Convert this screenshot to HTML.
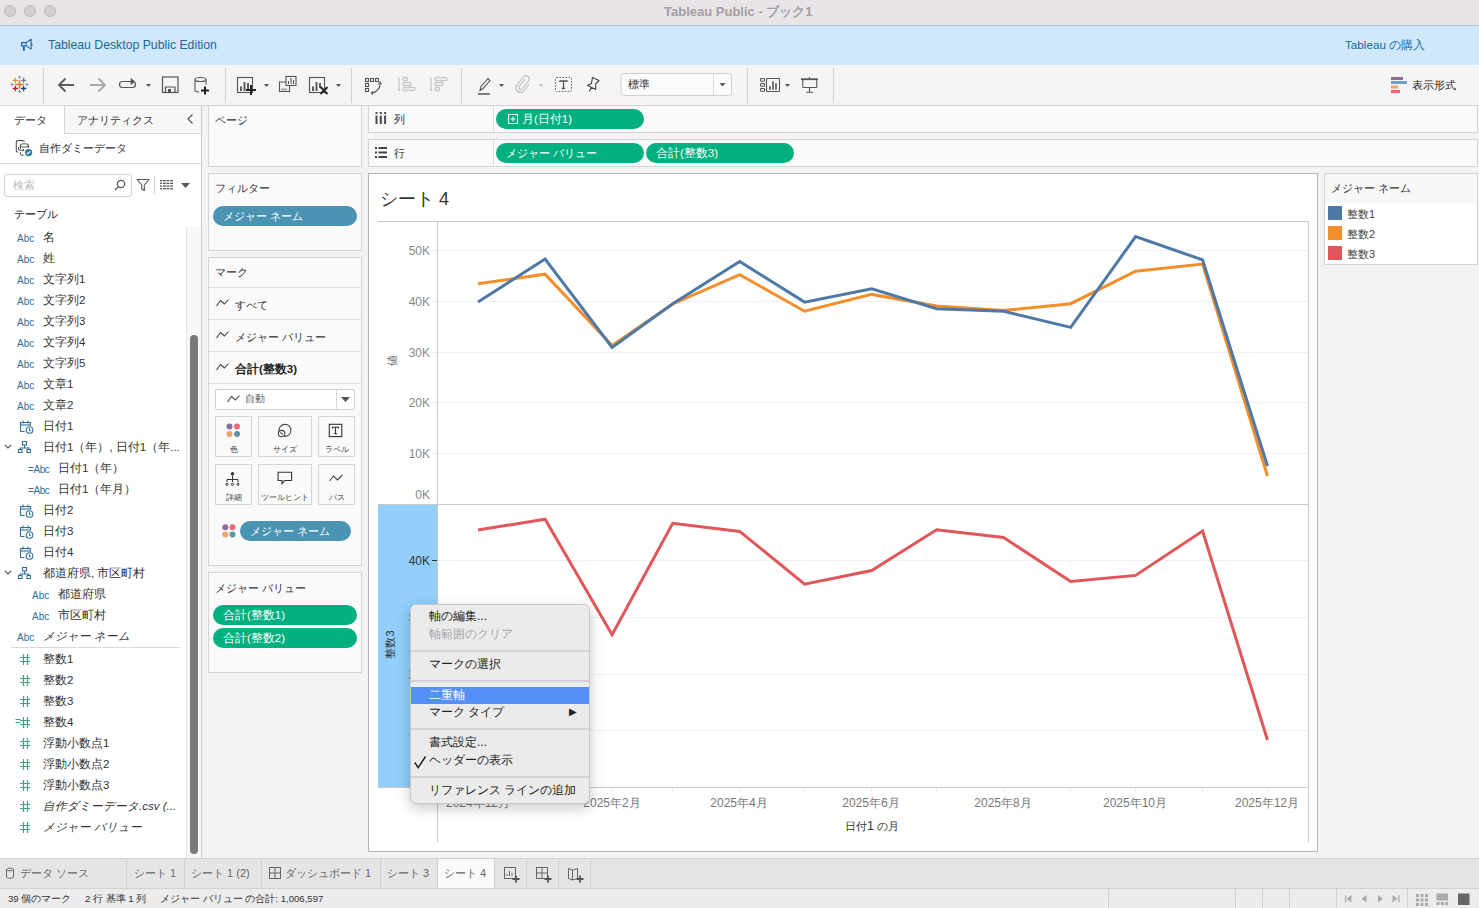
<!DOCTYPE html>
<html><head><meta charset="utf-8">
<style>
*{box-sizing:border-box;margin:0;padding:0}
html,body{width:1479px;height:908px;overflow:hidden;background:#f3f3f3;font-family:"Liberation Sans",sans-serif;color:#333;font-size:12px}
.a{position:absolute}
.t{position:absolute;white-space:nowrap;line-height:1}
#titlebar{left:0;top:0;width:1479px;height:26px;background:#e8e4e8;border-bottom:1px solid #a9bccc}
.tl{width:12px;height:12px;border-radius:50%;background:#d3cfd3;border:1px solid #bdb9bd;top:5px}
#banner{left:0;top:26px;width:1479px;height:39px;background:#cfe8fc}
#toolbar{left:0;top:65px;width:1479px;height:41px;background:#f5f5f5;border-bottom:1px solid #d6d6d6}
.sep{position:absolute;width:1px;background:#d0d0d0;top:3px;height:35px}
#datapane{left:0;top:106px;width:202px;height:752px;background:#fff;border-right:1px solid #cfcfcf}
.card{position:absolute;background:#fafafa;border:1px solid #d4d4d4}
.pill{position:absolute;height:20px;border-radius:10px;background:#01af7f;color:#fff;font-size:11px;line-height:20px;padding-left:10px;white-space:nowrap}
.pillb{background:#4b93b3}
.di{position:absolute;left:0;height:21px;width:186px;white-space:nowrap;font-size:12px;line-height:21px}
.abc{position:absolute;font-size:10px;color:#3b79a0;top:0}
.hash{position:absolute;font-size:14px;color:#35a57a;top:0}
</style></head><body>

<!-- title bar -->
<div id="titlebar" class="a">
  <div class="a tl" style="left:4px"></div>
  <div class="a tl" style="left:24px"></div>
  <div class="a tl" style="left:44px"></div>
  <div class="t" style="left:664px;top:5px;font-size:13px;font-weight:bold;color:#a39fa3">Tableau Public - ブック1</div>
</div>

<!-- banner -->
<div id="banner" class="a">
  <svg class="a" style="left:20px;top:12px" width="14" height="14" viewBox="20 38 14 14"><g fill="none" stroke="#1f64a0" stroke-linejoin="round"><path d="M21.6 42.6h4.6l4.9-3.3v9.8l-4.9-3.2h-4.6z" stroke-width="1.1"/><path d="M26.2 42.6v3.3" stroke-width="0.9"/><path d="M23.9 46.2v4.5" stroke-width="1.8"/></g><path d="M31.3 43.4a1.2 1.2 0 0 1 0 2.5z" fill="#1f64a0"/></svg>
  <div class="t" style="left:48px;top:13px;font-size:12.25px;color:#21699a">Tableau Desktop Public Edition</div>
  <div class="t" style="left:1345px;top:13px;font-size:11.7px;color:#21699a">Tableau の購入</div>
</div>

<!-- toolbar -->
<div id="toolbar" class="a"></div>
<svg class="a" style="left:0;top:0" width="1479" height="106" viewBox="0 0 1479 106">
 <g stroke="#d2d2d2" stroke-width="1">
  <line x1="43.5" y1="68" x2="43.5" y2="103"/><line x1="225.5" y1="68" x2="225.5" y2="103"/>
  <line x1="351.5" y1="68" x2="351.5" y2="103"/><line x1="461.5" y1="68" x2="461.5" y2="103"/>
  <line x1="747.5" y1="68" x2="747.5" y2="103"/><line x1="833.5" y1="68" x2="833.5" y2="103"/>
 </g>
 <path d="M15.3 84.5h8.4M19.5 80.3v8.4" stroke="#e8762d" stroke-width="1.6"/><path d="M12.600000000000001 80.4h5.4M15.3 77.7v5.4" stroke="#eb912b" stroke-width="1.3"/><path d="M20.900000000000002 80.4h5.4M23.6 77.7v5.4" stroke="#5b879b" stroke-width="1.3"/><path d="M12.600000000000001 88.5h5.4M15.3 85.8v5.4" stroke="#c72037" stroke-width="1.3"/><path d="M20.900000000000002 88.5h5.4M23.6 85.8v5.4" stroke="#1f457e" stroke-width="1.3"/><path d="M18.0 77.2h3.0M19.5 75.7v3.0" stroke="#7199a6" stroke-width="1"/><path d="M18.0 91.6h3.0M19.5 90.1v3.0" stroke="#7199a6" stroke-width="1"/><path d="M10.5 84.5h3.0M12 83.0v3.0" stroke="#7199a6" stroke-width="1"/><path d="M25.5 84.5h3.0M27 83.0v3.0" stroke="#7199a6" stroke-width="1"/>
 <g fill="none" stroke-linecap="butt">
  <path d="M74 85H59M65.5 78.5L59 85l6.5 6.5" stroke="#5c5c5c" stroke-width="1.8"/>
  <path d="M90 85h15M98.5 78.5L105 85l-6.5 6.5" stroke="#a9a9a9" stroke-width="1.8"/>
  <path d="M131 81.5h-8.5a3 3 0 0 0 0 6h10a3 3 0 0 0 0-6" stroke="#555" stroke-width="1.2"/>
  <path d="M131 78.5l3.5 3-3.5 3z" fill="#555" stroke="#555" stroke-width="0.8"/>
  <rect x="162.5" y="77" width="15.5" height="15.5" stroke="#555" stroke-width="1.2"/>
  <path d="M165.5 92.5v-5.5h9.5v5.5" stroke="#555" stroke-width="1.2"/>
  <rect x="168" y="89" width="3" height="3.5" fill="#555" stroke="none"/>
  <ellipse cx="200.5" cy="79.5" rx="5.5" ry="2" stroke="#555" stroke-width="1.1"/>
  <path d="M195 79.5v10.5c0 1 1.6 1.8 4 2M206 79.5v5" stroke="#555" stroke-width="1.1"/>
  <path d="M205 86.5v8M201 90.5h8" stroke="#222" stroke-width="2"/>
  <rect x="237.5" y="77.5" width="15" height="15" stroke="#555" stroke-width="1.1"/>
  <path d="M241 91v-4.5M244.5 91v-9M248 89v-6" stroke="#555" stroke-width="1.9"/>
  <path d="M251 85v10M246 90h10" stroke="#222" stroke-width="2" />
  <rect x="286" y="76.5" width="10" height="9" stroke="#555" stroke-width="1.1"/>
  <path d="M288.5 84v-3M291 84v-6M293.5 84v-4" stroke="#555" stroke-width="1.1"/>
  <path d="M286 82h-6.5v9.5h10v-6" stroke="#555" stroke-width="1.1"/>
  <path d="M282 90.5v-2M284 90.5v-2M286 90.5v-2" stroke="#555" stroke-width="1"/>
  <rect x="309.5" y="77.5" width="15" height="15" stroke="#555" stroke-width="1.1"/>
  <path d="M313 91v-4.5M316.5 91v-9M320 88v-5" stroke="#555" stroke-width="1.9"/>
  <path d="M320.5 87l7 7M327.5 87l-7 7" stroke="#222" stroke-width="2"/>
  <g stroke="#555" stroke-width="1.1"><rect x="365.5" y="78.5" width="3" height="3"/><rect x="370.5" y="78.5" width="3" height="3"/><rect x="375.5" y="78.5" width="3" height="3"/><rect x="365.5" y="83.5" width="3" height="3"/><rect x="365.5" y="88.5" width="3" height="3"/></g>
  <path d="M380 84c0 5-3.5 8.5-8.5 9" stroke="#555" stroke-width="1.1"/>
  <path d="M378.5 84.5l1.5-2.5 1.5 2.5M373 91.5l-1.5 1.5 1.5 1.5" stroke="#555" stroke-width="1.1"/>
  <g stroke="#c8c8c8" stroke-width="1.3"><path d="M399 77.5v12"/><rect x="403" y="77.5" width="4.5" height="3" rx="1.2"/><rect x="403" y="82.5" width="8" height="3" rx="1.2"/><rect x="403" y="87.5" width="12" height="3" rx="1.2"/></g><path d="M397.3 89h3.4l-1.7 2.6z" fill="#c8c8c8"/>
  <g stroke="#c8c8c8" stroke-width="1.3"><path d="M431 77.5v12"/><rect x="435" y="77.5" width="12" height="3" rx="1.2"/><rect x="435" y="82.5" width="8" height="3" rx="1.2"/><rect x="435" y="87.5" width="4.5" height="3" rx="1.2"/></g><path d="M429.3 89h3.4l-1.7 2.6z" fill="#c8c8c8"/>
  <path d="M480 90.5l1-4 7-8 2 2-7 8z" stroke="#555" stroke-width="1.1"/>
  <path d="M478 94h12" stroke="#555" stroke-width="1.5"/>
  <path d="M525 79l-6 7.5a2 2 0 0 0 3 2.5l6.5-8a3.2 3.2 0 0 0-5-4l-7 8.5a4.5 4.5 0 0 0 7 5.5l5.5-6.5" stroke="#bbb" stroke-width="1.1"/>
  <rect x="555.5" y="77.5" width="16" height="14" rx="1" stroke="#666" stroke-width="1" stroke-dasharray="1.6 1.4"/>
  <path d="M560 82v-1h7v1M563.5 81v7.5M561.8 88.5h3.4" stroke="#555" stroke-width="1.3"/>
  <path d="M592.5 77.5L599 80.5L595.7 83.7L595.7 89.5L587.5 85.3L591.4 83.7Z M591.3 87.5L589.2 91.5" stroke="#444" stroke-width="1.1" stroke-linejoin="round"/>
  <rect x="621" y="73.5" width="110.5" height="22" rx="3" fill="#fbfbfb" stroke="#cfcfcf" stroke-width="1"/>
  <line x1="713.5" y1="74" x2="713.5" y2="95" stroke="#dcdcdc" stroke-width="1"/>
  <g stroke="#555" stroke-width="1.1"><rect x="760.5" y="78.5" width="4" height="2.8" rx="0.8"/><rect x="760.5" y="83.5" width="4" height="2.8" rx="0.8"/><rect x="760.5" y="88.5" width="4" height="2.8" rx="0.8"/><rect x="766.5" y="78.5" width="13" height="13" rx="0.8"/></g>
  <path d="M770 89.8v-3.6M773 89.8v-8.6M776 89.8v-6.5" stroke="#555" stroke-width="1.6"/>
  <path d="M801 79.2h17" stroke="#555" stroke-width="1.8"/><path d="M809.5 77v2" stroke="#555" stroke-width="1"/>
  <path d="M802.8 79.5v7.2a0.8 0.8 0 0 0 .8.8h12.4a0.8 0.8 0 0 0 .8-.8v-7.2M809.5 87.5v4.8M806 92.3h7" stroke="#555" stroke-width="1.1"/>
 </g>
 <g fill="#555">
  <path d="M146 84h5l-2.5 3z"/><path d="M264 84h5l-2.5 3z"/><path d="M336 84h5l-2.5 3z"/><path d="M499 84h5l-2.5 3z"/>
  <path d="M785 84h5l-2.5 3z"/><path d="M719.5 83h6l-3 3.5z"/>
 </g>
 <path d="M538.5 84h5l-2.5 3z" fill="#c4c4c4"/>
 <g>
  <rect x="1391" y="77" width="12" height="3" fill="#8a6d94"/>
  <rect x="1391" y="81" width="16" height="3" fill="#6f9fc9"/>
  <rect x="1391" y="85.5" width="7" height="3" fill="#f0a55c"/>
  <rect x="1391" y="90" width="9" height="3" fill="#e86877"/>
 </g>
</svg>
<div class="t" style="left:628px;top:79px;font-size:11px;color:#333">標準</div>
<div class="t" style="left:1412px;top:80px;font-size:11px;color:#222">表示形式</div>

<!-- data pane -->
<div class="a" style="left:0;top:106px;width:202px;height:752px;background:#fff;border-right:1px solid #c9c9c9">
<div class="a" style="left:64px;top:0;width:137px;height:28px;background:#f7f7f7;border-left:1px solid #d6d6d6;border-bottom:1px solid #d6d6d6"></div>
<div class="t" style="left:14px;top:9px;font-size:11px;color:#333">データ</div>
<div class="t" style="left:77px;top:9px;font-size:11px;color:#333">アナリティクス</div>
<svg class="a" style="left:186px;top:7px" width="8" height="12" viewBox="0 0 8 12"><path d="M6.5 1.5L2 6l4.5 4.5" fill="none" stroke="#555" stroke-width="1.2"/></svg>
<div class="a" style="left:0;top:57px;width:201px;height:1px;background:#dcdcdc"></div>
<svg class="a" style="left:14px;top:33px" width="20" height="20" viewBox="14 139 20 20"><g fill="none" stroke="#555" stroke-width="1.1" stroke-linecap="round"><path d="M24.3 141.3c-1-.6-2.5-.9-4-.9-2.3 0-4 .8-4 1.8v8.6c0 .6.6 1.1 1.6 1.4"/><ellipse cx="24.4" cy="145.4" rx="4" ry="1.6"/><path d="M20.4 145.4v3M28.4 145.4v2"/><path d="M18.5 147.5v1.3c0 .8.8 1.4 2 1.4h2.5"/><path d="M20.5 152.5v1.3c0 .8 1 1.4 2.5 1.6"/></g><path d="M22.8 148.6l1.8 1.6-1.8 1.6z" fill="#555"/><circle cx="28.6" cy="152.6" r="3.6" fill="#2e7ca0"/><path d="M26.8 152.6l1.2 1.2 2.3-2.4" fill="none" stroke="#fff" stroke-width="1.1"/></svg>
<div class="t" style="left:39px;top:37px;font-size:11px;color:#333">自作ダミーデータ</div>
<div class="a" style="left:4px;top:68px;width:128px;height:23px;border:1px solid #d2d2d2;border-radius:3px;background:#fff"></div>
<div class="t" style="left:13px;top:74px;font-size:11px;color:#bdbdbd">検索</div>
<svg class="a" style="left:114px;top:73px" width="12" height="12" viewBox="0 0 12 12"><g fill="none" stroke="#555" stroke-width="1.2"><circle cx="7" cy="5" r="3.6"/><path d="M4.4 7.6L1 11"/></g></svg>
<svg class="a" style="left:136px;top:72px" width="14" height="14" viewBox="0 0 14 14"><path d="M1 1.5h12L8.3 7v5.5L5.7 11V7z" fill="none" stroke="#555" stroke-width="1.1" stroke-linejoin="round"/></svg>
<div class="a" style="left:154px;top:70px;width:1px;height:18px;background:#d6d6d6"></div>
<svg class="a" style="left:160px;top:74px" width="13" height="10" viewBox="0 0 13 10"><g fill="#555"><rect x="0" y="0" width="2" height="1.3"/><rect x="3" y="0" width="2.8" height="1.3"/><rect x="6.6" y="0" width="2.8" height="1.3"/><rect x="10.2" y="0" width="2.8" height="1.3"/><rect x="0" y="2.7" width="2" height="1.3"/><rect x="3" y="2.7" width="2.8" height="1.3"/><rect x="6.6" y="2.7" width="2.8" height="1.3"/><rect x="10.2" y="2.7" width="2.8" height="1.3"/><rect x="0" y="5.4" width="2" height="1.3"/><rect x="3" y="5.4" width="2.8" height="1.3"/><rect x="6.6" y="5.4" width="2.8" height="1.3"/><rect x="10.2" y="5.4" width="2.8" height="1.3"/><rect x="0" y="8.1" width="2" height="1.3"/><rect x="3" y="8.1" width="2.8" height="1.3"/><rect x="6.6" y="8.1" width="2.8" height="1.3"/><rect x="10.2" y="8.1" width="2.8" height="1.3"/></g></svg>
<svg class="a" style="left:181px;top:77px" width="9" height="5" viewBox="0 0 9 5"><path d="M0 0h9L4.5 5z" fill="#555"/></svg>
<div class="t" style="left:14px;top:103px;font-size:11px;color:#222">テーブル</div>
<div class="a" style="left:186px;top:121px;width:15px;height:631px;background:#f8f8f8;border-left:1px solid #e6e6e6"></div>
<div class="a" style="left:190px;top:229px;width:8px;height:519px;background:#7a7a7a;border-radius:4px"></div>
<div class="t" style="left:17px;top:128px;font-size:10px;color:#2f6f97">Abc</div>
<div class="t" style="left:43px;top:126px;font-size:11.5px;color:#333;">名</div>
<div class="t" style="left:17px;top:149px;font-size:10px;color:#2f6f97">Abc</div>
<div class="t" style="left:43px;top:147px;font-size:11.5px;color:#333;">姓</div>
<div class="t" style="left:17px;top:170px;font-size:10px;color:#2f6f97">Abc</div>
<div class="t" style="left:43px;top:168px;font-size:11.5px;color:#333;">文字列1</div>
<div class="t" style="left:17px;top:191px;font-size:10px;color:#2f6f97">Abc</div>
<div class="t" style="left:43px;top:189px;font-size:11.5px;color:#333;">文字列2</div>
<div class="t" style="left:17px;top:212px;font-size:10px;color:#2f6f97">Abc</div>
<div class="t" style="left:43px;top:210px;font-size:11.5px;color:#333;">文字列3</div>
<div class="t" style="left:17px;top:233px;font-size:10px;color:#2f6f97">Abc</div>
<div class="t" style="left:43px;top:231px;font-size:11.5px;color:#333;">文字列4</div>
<div class="t" style="left:17px;top:254px;font-size:10px;color:#2f6f97">Abc</div>
<div class="t" style="left:43px;top:252px;font-size:11.5px;color:#333;">文字列5</div>
<div class="t" style="left:17px;top:275px;font-size:10px;color:#2f6f97">Abc</div>
<div class="t" style="left:43px;top:273px;font-size:11.5px;color:#333;">文章1</div>
<div class="t" style="left:17px;top:296px;font-size:10px;color:#2f6f97">Abc</div>
<div class="t" style="left:43px;top:294px;font-size:11.5px;color:#333;">文章2</div>
<svg class="a" style="left:19px;top:314px" width="15" height="14" viewBox="0 0 15 14"><g fill="none" stroke="#2f6f97" stroke-width="1.1"><path d="M1.5 11.5V2.5h10v3"/><path d="M1.5 5h10"/><path d="M4 0.5v3M9 0.5v3"/><path d="M1.5 11.5h4"/><circle cx="10.5" cy="10" r="3.3"/><path d="M10.5 8.3v1.9l1.2.8"/></g></svg>
<div class="t" style="left:43px;top:315px;font-size:11.5px;color:#333;">日付1</div>
<svg class="a" style="left:4px;top:338px" width="8" height="6" viewBox="0 0 8 6"><path d="M1 1l3 3 3-3" fill="none" stroke="#555" stroke-width="1.1"/></svg><svg class="a" style="left:18px;top:335px" width="13" height="12" viewBox="0 0 13 12"><g fill="none" stroke="#2f6f97" stroke-width="1.1"><rect x="4.5" y="0.5" width="4" height="3.5"/><path d="M6.5 4v3M2.2 9V7h8.6V9"/><rect x="0.5" y="8.5" width="3.5" height="3"/><rect x="9" y="8.5" width="3.5" height="3"/></g></svg>
<div class="t" style="left:43px;top:336px;font-size:11.5px;color:#333;">日付1（年）, 日付1（年...</div>
<div class="t" style="left:28px;top:359px;font-size:10px;color:#2f6f97;letter-spacing:-0.4px">=Abc</div>
<div class="t" style="left:58px;top:357px;font-size:11.5px;color:#333;">日付1（年）</div>
<div class="t" style="left:28px;top:380px;font-size:10px;color:#2f6f97;letter-spacing:-0.4px">=Abc</div>
<div class="t" style="left:58px;top:378px;font-size:11.5px;color:#333;">日付1（年月）</div>
<svg class="a" style="left:19px;top:398px" width="15" height="14" viewBox="0 0 15 14"><g fill="none" stroke="#2f6f97" stroke-width="1.1"><path d="M1.5 11.5V2.5h10v3"/><path d="M1.5 5h10"/><path d="M4 0.5v3M9 0.5v3"/><path d="M1.5 11.5h4"/><circle cx="10.5" cy="10" r="3.3"/><path d="M10.5 8.3v1.9l1.2.8"/></g></svg>
<div class="t" style="left:43px;top:399px;font-size:11.5px;color:#333;">日付2</div>
<svg class="a" style="left:19px;top:419px" width="15" height="14" viewBox="0 0 15 14"><g fill="none" stroke="#2f6f97" stroke-width="1.1"><path d="M1.5 11.5V2.5h10v3"/><path d="M1.5 5h10"/><path d="M4 0.5v3M9 0.5v3"/><path d="M1.5 11.5h4"/><circle cx="10.5" cy="10" r="3.3"/><path d="M10.5 8.3v1.9l1.2.8"/></g></svg>
<div class="t" style="left:43px;top:420px;font-size:11.5px;color:#333;">日付3</div>
<svg class="a" style="left:19px;top:440px" width="15" height="14" viewBox="0 0 15 14"><g fill="none" stroke="#2f6f97" stroke-width="1.1"><path d="M1.5 11.5V2.5h10v3"/><path d="M1.5 5h10"/><path d="M4 0.5v3M9 0.5v3"/><path d="M1.5 11.5h4"/><circle cx="10.5" cy="10" r="3.3"/><path d="M10.5 8.3v1.9l1.2.8"/></g></svg>
<div class="t" style="left:43px;top:441px;font-size:11.5px;color:#333;">日付4</div>
<svg class="a" style="left:4px;top:464px" width="8" height="6" viewBox="0 0 8 6"><path d="M1 1l3 3 3-3" fill="none" stroke="#555" stroke-width="1.1"/></svg><svg class="a" style="left:18px;top:461px" width="13" height="12" viewBox="0 0 13 12"><g fill="none" stroke="#2f6f97" stroke-width="1.1"><rect x="4.5" y="0.5" width="4" height="3.5"/><path d="M6.5 4v3M2.2 9V7h8.6V9"/><rect x="0.5" y="8.5" width="3.5" height="3"/><rect x="9" y="8.5" width="3.5" height="3"/></g></svg>
<div class="t" style="left:43px;top:462px;font-size:11.5px;color:#333;">都道府県, 市区町村</div>
<div class="t" style="left:32px;top:485px;font-size:10px;color:#2f6f97">Abc</div>
<div class="t" style="left:58px;top:483px;font-size:11.5px;color:#333;">都道府県</div>
<div class="t" style="left:32px;top:506px;font-size:10px;color:#2f6f97">Abc</div>
<div class="t" style="left:58px;top:504px;font-size:11.5px;color:#333;">市区町村</div>
<div class="t" style="left:17px;top:527px;font-size:10px;color:#2f6f97">Abc</div>
<div class="t" style="left:43px;top:525px;font-size:11.5px;color:#333;font-style:italic;">メジャー ネーム</div>
<div class="a" style="left:11px;top:541px;width:169px;height:1px;background:#dadada"></div>
<svg class="a" style="left:19px;top:548px" width="12" height="11" viewBox="0 0 12 11"><g stroke="#45a37c" stroke-width="1.2"><path d="M4.5 0v11M8.5 0v11M1 3.5h10M1 7.5h10"/></g></svg>
<div class="t" style="left:43px;top:548px;font-size:11.5px;color:#333;">整数1</div>
<svg class="a" style="left:19px;top:569px" width="12" height="11" viewBox="0 0 12 11"><g stroke="#45a37c" stroke-width="1.2"><path d="M4.5 0v11M8.5 0v11M1 3.5h10M1 7.5h10"/></g></svg>
<div class="t" style="left:43px;top:569px;font-size:11.5px;color:#333;">整数2</div>
<svg class="a" style="left:19px;top:590px" width="12" height="11" viewBox="0 0 12 11"><g stroke="#45a37c" stroke-width="1.2"><path d="M4.5 0v11M8.5 0v11M1 3.5h10M1 7.5h10"/></g></svg>
<div class="t" style="left:43px;top:590px;font-size:11.5px;color:#333;">整数3</div>
<div class="t" style="left:15px;top:611px;font-size:10px;color:#45a37c">=</div>
<svg class="a" style="left:19px;top:611px" width="12" height="11" viewBox="0 0 12 11"><g stroke="#45a37c" stroke-width="1.2"><path d="M4.5 0v11M8.5 0v11M1 3.5h10M1 7.5h10"/></g></svg>
<div class="t" style="left:43px;top:611px;font-size:11.5px;color:#333;">整数4</div>
<svg class="a" style="left:19px;top:632px" width="12" height="11" viewBox="0 0 12 11"><g stroke="#45a37c" stroke-width="1.2"><path d="M4.5 0v11M8.5 0v11M1 3.5h10M1 7.5h10"/></g></svg>
<div class="t" style="left:43px;top:632px;font-size:11.5px;color:#333;">浮動小数点1</div>
<svg class="a" style="left:19px;top:653px" width="12" height="11" viewBox="0 0 12 11"><g stroke="#45a37c" stroke-width="1.2"><path d="M4.5 0v11M8.5 0v11M1 3.5h10M1 7.5h10"/></g></svg>
<div class="t" style="left:43px;top:653px;font-size:11.5px;color:#333;">浮動小数点2</div>
<svg class="a" style="left:19px;top:674px" width="12" height="11" viewBox="0 0 12 11"><g stroke="#45a37c" stroke-width="1.2"><path d="M4.5 0v11M8.5 0v11M1 3.5h10M1 7.5h10"/></g></svg>
<div class="t" style="left:43px;top:674px;font-size:11.5px;color:#333;">浮動小数点3</div>
<svg class="a" style="left:19px;top:695px" width="12" height="11" viewBox="0 0 12 11"><g stroke="#45a37c" stroke-width="1.2"><path d="M4.5 0v11M8.5 0v11M1 3.5h10M1 7.5h10"/></g></svg>
<div class="t" style="left:43px;top:695px;font-size:11.5px;color:#333;font-style:italic;">自作ダミーデータ.csv (...</div>
<svg class="a" style="left:19px;top:716px" width="12" height="11" viewBox="0 0 12 11"><g stroke="#45a37c" stroke-width="1.2"><path d="M4.5 0v11M8.5 0v11M1 3.5h10M1 7.5h10"/></g></svg>
<div class="t" style="left:43px;top:716px;font-size:11.5px;color:#333;font-style:italic;">メジャー バリュー</div>
</div>
<!-- shelves column -->
<div class="card" style="left:208px;top:105px;width:154px;height:62px"></div>
<div class="t" style="left:215px;top:115px;font-size:11px;color:#333">ページ</div>
<div class="card" style="left:208px;top:173px;width:154px;height:78px"></div>
<div class="t" style="left:215px;top:183px;font-size:11px;color:#333">フィルター</div>
<div class="pill pillb" style="left:213px;top:206px;width:144px">メジャー ネーム</div>
<div class="card" style="left:208px;top:257px;width:154px;height:309px"></div>
<div class="t" style="left:215px;top:267px;font-size:11px;color:#333">マーク</div>
<div class="a" style="left:209px;top:287px;width:152px;height:1px;background:#dedede"></div>
<div class="a" style="left:209px;top:319px;width:152px;height:1px;background:#dedede"></div>
<div class="a" style="left:209px;top:351px;width:152px;height:1px;background:#dedede"></div>
<div class="a" style="left:209px;top:383px;width:152px;height:1px;background:#dedede"></div>
<svg class="a" style="left:216px;top:298px" width="13" height="9" viewBox="0 0 13 9"><path d="M0.5 8L4.5 2.5l4 3.5 4-4.5" fill="none" stroke="#444" stroke-width="1.1"/></svg>
<div class="t" style="left:235px;top:300px;font-size:11px;color:#333">すべて</div>
<svg class="a" style="left:216px;top:330px" width="13" height="9" viewBox="0 0 13 9"><path d="M0.5 8L4.5 2.5l4 3.5 4-4.5" fill="none" stroke="#444" stroke-width="1.1"/></svg>
<div class="t" style="left:235px;top:332px;font-size:11px;color:#333">メジャー バリュー</div>
<svg class="a" style="left:216px;top:362px" width="13" height="9" viewBox="0 0 13 9"><path d="M0.5 8L4.5 2.5l4 3.5 4-4.5" fill="none" stroke="#444" stroke-width="1.1"/></svg>
<div class="t" style="left:235px;top:364px;font-size:11.5px;color:#222;font-weight:bold">合計(整数3)</div>
<div class="a" style="left:215px;top:389px;width:140px;height:21px;background:#fff;border:1px solid #d0d0d0;border-radius:2px"></div>
<div class="a" style="left:336px;top:390px;width:1px;height:19px;background:#d8d8d8"></div>
<svg class="a" style="left:341px;top:397px" width="9" height="5" viewBox="0 0 9 5"><path d="M0 0h9L4.5 5z" fill="#555"/></svg>
<svg class="a" style="left:227px;top:394px" width="13" height="9" viewBox="0 0 13 9"><path d="M0.5 8L4.5 2.5l4 3.5 4-4.5" fill="none" stroke="#444" stroke-width="1.1"/></svg>
<div class="t" style="left:245px;top:394px;font-size:10px;color:#555">自動</div>
<div class="a" style="left:215px;top:416px;width:37px;height:41px;background:#fafafa;border:1px solid #d6d6d6"></div>
<div class="t" style="left:215px;top:446px;width:37px;text-align:center;font-size:8px;color:#444">色</div>
<div class="a" style="left:258px;top:416px;width:54px;height:41px;background:#fafafa;border:1px solid #d6d6d6"></div>
<div class="t" style="left:258px;top:446px;width:54px;text-align:center;font-size:8px;color:#444">サイズ</div>
<div class="a" style="left:318px;top:416px;width:37px;height:41px;background:#fafafa;border:1px solid #d6d6d6"></div>
<div class="t" style="left:318px;top:446px;width:37px;text-align:center;font-size:8px;color:#444">ラベル</div>
<div class="a" style="left:215px;top:464px;width:37px;height:41px;background:#fafafa;border:1px solid #d6d6d6"></div>
<div class="t" style="left:215px;top:494px;width:37px;text-align:center;font-size:8px;color:#444">詳細</div>
<div class="a" style="left:258px;top:464px;width:54px;height:41px;background:#fafafa;border:1px solid #d6d6d6"></div>
<div class="t" style="left:258px;top:494px;width:54px;text-align:center;font-size:8px;color:#444">ツールヒント</div>
<div class="a" style="left:318px;top:464px;width:37px;height:41px;background:#fafafa;border:1px solid #d6d6d6"></div>
<div class="t" style="left:318px;top:494px;width:37px;text-align:center;font-size:8px;color:#444">パス</div>
<svg class="a" style="left:226px;top:423px" width="15" height="15" viewBox="0 0 15 15"><circle cx="3.5" cy="3.5" r="3" fill="#8f6aa0"/><circle cx="11" cy="3.5" r="3" fill="#e86a7a"/><circle cx="3.5" cy="11" r="3" fill="#eea56b"/><circle cx="11" cy="11" r="3" fill="#5f94a0"/></svg>
<svg class="a" style="left:275px;top:420px" width="18" height="18" viewBox="275 420 18 18"><g fill="none" stroke="#444" stroke-width="1.1"><path d="M284.2 436.3A6 6 0 1 0 279 431.5"/><circle cx="281.6" cy="433.6" r="3.2"/><path d="M280.4 432.4l2.2 2.2"/></g></svg>
<svg class="a" style="left:328px;top:423px" width="15" height="15" viewBox="328 423 15 15"><rect x="329.3" y="424.3" width="12.5" height="12.3" fill="none" stroke="#333" stroke-width="1.1"/><path d="M332.5 428.5v-1.2h6v1.2M335.5 427.3v6.5M334 433.8h3" fill="none" stroke="#333" stroke-width="1.1"/></svg>
<svg class="a" style="left:224px;top:470px" width="17" height="17" viewBox="224 470 17 17"><circle cx="232.5" cy="473.8" r="1.7" fill="#333"/><g fill="none" stroke="#333" stroke-width="1"><path d="M232.5 475.5v4M227 482v-2.5h11v2.5M232.5 479.5v2.5"/><circle cx="227" cy="484.3" r="1.1"/><circle cx="232.5" cy="484.3" r="1.1"/><circle cx="238" cy="484.3" r="1.1"/></g></svg>
<svg class="a" style="left:276px;top:470px" width="18" height="16" viewBox="276 470 18 16"><path d="M278.1 472.3h13.5v8.2h-7l-2.6 3.2v-3.2h-3.9z" fill="none" stroke="#333" stroke-width="1.1" stroke-linejoin="miter"/></svg>
<svg class="a" style="left:329px;top:474px" width="14" height="9" viewBox="0 0 14 9"><path d="M0.5 7L4.5 2l4 4 5-5" fill="none" stroke="#444" stroke-width="1.1"/></svg>
<svg class="a" style="left:222px;top:524px" width="14" height="14" viewBox="0 0 14 14"><circle cx="3.3" cy="3.3" r="3" fill="#8f6aa0"/><circle cx="10.5" cy="3.3" r="3" fill="#e86a7a"/><circle cx="3.3" cy="10.5" r="3" fill="#eea56b"/><circle cx="10.5" cy="10.5" r="3" fill="#5f94a0"/></svg>
<div class="pill pillb" style="left:240px;top:521px;width:111px">メジャー ネーム</div>
<div class="card" style="left:208px;top:572px;width:154px;height:101px"></div>
<div class="t" style="left:215px;top:583px;font-size:11px;color:#333">メジャー バリュー</div>
<div class="pill" style="left:213px;top:605px;width:144px;font-size:11.5px">合計(整数1)</div>
<div class="pill" style="left:213px;top:628px;width:144px;font-size:11.5px">合計(整数2)</div>
<!-- col / row shelves -->
<div class="card" style="left:368px;top:105px;width:1110px;height:28px"></div>
<div class="a" style="left:493px;top:106px;width:1px;height:26px;background:#dcdcdc"></div>
<svg class="a" style="left:375px;top:112px" width="12" height="12" viewBox="0 0 12 12"><g fill="#4a4a4a"><rect x="0.5" y="0" width="2" height="2"/><rect x="0.5" y="3.5" width="2" height="8.5"/><rect x="4.8" y="0" width="2" height="2"/><rect x="4.8" y="3.5" width="2" height="8.5"/><rect x="9.1" y="0" width="2" height="2"/><rect x="9.1" y="3.5" width="2" height="8.5"/></g></svg>
<div class="t" style="left:394px;top:114px;font-size:11px;color:#333">列</div>
<div class="pill" style="left:496px;top:109px;width:148px;padding-left:16px;font-size:11.5px"><svg style="position:absolute;left:12px;top:5px" width="10" height="10" viewBox="0 0 10 10"><rect x="0.5" y="0.5" width="9" height="9" fill="none" stroke="#fff" stroke-width="1"/><path d="M5 2.5v5M2.5 5h5" stroke="#fff" stroke-width="1"/></svg><span style="margin-left:10px">月(日付1)</span></div>
<div class="card" style="left:368px;top:139px;width:1110px;height:28px"></div>
<div class="a" style="left:493px;top:140px;width:1px;height:26px;background:#dcdcdc"></div>
<svg class="a" style="left:375px;top:147px" width="12" height="11" viewBox="0 0 12 11"><g fill="#444"><rect x="0" y="0" width="2" height="2"/><rect x="3.5" y="0" width="8.5" height="2"/><rect x="0" y="4.5" width="2" height="2"/><rect x="3.5" y="4.5" width="8.5" height="2"/><rect x="0" y="9" width="2" height="2"/><rect x="3.5" y="9" width="8.5" height="2"/></g></svg>
<div class="t" style="left:394px;top:148px;font-size:11px;color:#333">行</div>
<div class="pill" style="left:496px;top:143px;width:148px">メジャー バリュー</div>
<div class="pill" style="left:646px;top:143px;width:148px;font-size:11.5px">合計(整数3)</div>

<!-- sheet -->
<div class="a" style="left:368px;top:173px;width:950px;height:679px;background:#fff;border:1px solid #b5b5b5"></div>
<div class="t" style="left:380px;top:190px;font-size:18px;color:#333">シート 4</div>
<svg class="a" style="left:0;top:0" width="1479" height="908" viewBox="0 0 1479 908">
 <rect x="378" y="504.5" width="59" height="283" fill="#92cffb"/>
 <g stroke="#efefef" stroke-width="1">
  <line x1="437" y1="250.5" x2="1308" y2="250.5"/>
  <line x1="437" y1="301.5" x2="1308" y2="301.5"/>
  <line x1="437" y1="352.5" x2="1308" y2="352.5"/>
  <line x1="437" y1="402.5" x2="1308" y2="402.5"/>
  <line x1="437" y1="453.5" x2="1308" y2="453.5"/>
  <line x1="437" y1="560.5" x2="1308" y2="560.5"/>
  <line x1="437" y1="617.5" x2="1308" y2="617.5"/>
  <line x1="437" y1="674.5" x2="1308" y2="674.5"/>
  <line x1="437" y1="730.5" x2="1308" y2="730.5"/>
 </g>
 <g stroke="#c9c9c9" stroke-width="1">
  <line x1="378" y1="221.5" x2="1308.5" y2="221.5"/>
  <line x1="437.5" y1="221" x2="437.5" y2="842"/>
  <line x1="1308.5" y1="221" x2="1308.5" y2="842"/>
  <line x1="378" y1="504.5" x2="1308.5" y2="504.5"/>
  <line x1="378" y1="787.5" x2="1308.5" y2="787.5"/>
 </g>
 <g stroke="#e6e6e6" stroke-width="1">
  <line x1="433" y1="250.5" x2="437" y2="250.5"/>
  <line x1="433" y1="301.5" x2="437" y2="301.5"/>
  <line x1="433" y1="352.5" x2="437" y2="352.5"/>
  <line x1="433" y1="402.5" x2="437" y2="402.5"/>
  <line x1="433" y1="453.5" x2="437" y2="453.5"/>
 </g>
 <line x1="432" y1="560.5" x2="437" y2="560.5" stroke="#333" stroke-width="1"/>
 <g stroke="#ececec" stroke-width="1">
  <line x1="478.5" y1="788" x2="478.5" y2="792"/><line x1="545.5" y1="788" x2="545.5" y2="792"/>
  <line x1="612.5" y1="788" x2="612.5" y2="792"/><line x1="672.5" y1="788" x2="672.5" y2="792"/>
  <line x1="739.5" y1="788" x2="739.5" y2="792"/><line x1="804.5" y1="788" x2="804.5" y2="792"/>
  <line x1="871.5" y1="788" x2="871.5" y2="792"/><line x1="936.5" y1="788" x2="936.5" y2="792"/>
  <line x1="1003.5" y1="788" x2="1003.5" y2="792"/><line x1="1070.5" y1="788" x2="1070.5" y2="792"/>
  <line x1="1135.5" y1="788" x2="1135.5" y2="792"/><line x1="1202.5" y1="788" x2="1202.5" y2="792"/>
  <line x1="1267.5" y1="788" x2="1267.5" y2="792"/>
 </g>
 <g fill="none" stroke-width="3" stroke-linejoin="miter" stroke-linecap="butt">
  <polyline stroke="#f28e2b" points="478.0,283.8 545.1,274.2 612.1,345.6 672.7,304.0 739.7,274.7 804.6,311.2 871.7,294.4 936.6,306.1 1003.6,310.6 1070.7,303.7 1135.6,271.2 1202.6,264.0 1267.5,476.0"/>
  <polyline stroke="#4e79a7" points="478.0,302.0 545.1,259.0 612.1,347.4 672.7,303.8 739.7,261.5 804.6,302.1 871.7,288.9 936.6,308.8 1003.6,311.2 1070.7,327.4 1135.6,236.6 1202.6,259.9 1267.5,466.0"/>
  <polyline stroke="#e15759" points="478.0,530.0 545.1,519.2 612.1,634.8 672.7,523.3 739.7,531.4 804.6,584.1 871.7,570.5 936.6,529.7 1003.6,537.5 1070.7,581.5 1135.6,575.4 1202.6,531.0 1267.5,740.0"/>
 </g>
</svg>
<div class="t" style="left:400px;top:245px;width:30px;text-align:right;font-size:12px;color:#888">50K</div>
<div class="t" style="left:400px;top:296px;width:30px;text-align:right;font-size:12px;color:#888">40K</div>
<div class="t" style="left:400px;top:347px;width:30px;text-align:right;font-size:12px;color:#888">30K</div>
<div class="t" style="left:400px;top:397px;width:30px;text-align:right;font-size:12px;color:#888">20K</div>
<div class="t" style="left:400px;top:448px;width:30px;text-align:right;font-size:12px;color:#888">10K</div>
<div class="t" style="left:400px;top:489px;width:30px;text-align:right;font-size:12px;color:#888">0K</div>
<div class="t" style="left:400px;top:555px;width:30px;text-align:right;font-size:12px;color:#333">40K</div>
<div class="t" style="left:400px;top:612px;width:30px;text-align:right;font-size:12px;color:#333">30K</div>
<div class="t" style="left:400px;top:669px;width:30px;text-align:right;font-size:12px;color:#333">20K</div>
<div class="t" style="left:400px;top:725px;width:30px;text-align:right;font-size:12px;color:#333">10K</div>
<div class="t" style="left:387px;top:355px;font-size:11px;color:#666;transform:rotate(-90deg);transform-origin:center">値</div>
<div class="t" style="left:376px;top:639px;font-size:11px;color:#333;transform:rotate(-90deg);transform-origin:center">整数3</div>
<div class="t" style="left:443px;top:797px;width:70px;text-align:center;font-size:12px;color:#777">2024年12月</div>
<div class="t" style="left:577px;top:797px;width:70px;text-align:center;font-size:12px;color:#777">2025年2月</div>
<div class="t" style="left:704px;top:797px;width:70px;text-align:center;font-size:12px;color:#777">2025年4月</div>
<div class="t" style="left:836px;top:797px;width:70px;text-align:center;font-size:12px;color:#777">2025年6月</div>
<div class="t" style="left:968px;top:797px;width:70px;text-align:center;font-size:12px;color:#777">2025年8月</div>
<div class="t" style="left:1100px;top:797px;width:70px;text-align:center;font-size:12px;color:#777">2025年10月</div>
<div class="t" style="left:1232px;top:797px;width:70px;text-align:center;font-size:12px;color:#777">2025年12月</div>
<div class="t" style="left:837px;top:820px;width:70px;text-align:center;font-size:11px;color:#333">日付<span style="font-size:12.5px">1</span> の月</div>


<!-- context menu -->
<div class="a" style="left:410px;top:604px;width:180px;height:200px;background:#ebebeb;border:1px solid #c8c8c8;border-radius:6px;box-shadow:0 4px 14px rgba(0,0,0,0.22)">
 <div class="a" style="left:0;top:82px;width:178px;height:17px;background:#5490f6"></div>
 <div class="a" style="left:0;top:45px;width:178px;height:2px;background:#d4d4d4"></div>
 <div class="a" style="left:0;top:75px;width:178px;height:2px;background:#d4d4d4"></div>
 <div class="a" style="left:0;top:123px;width:178px;height:2px;background:#d4d4d4"></div>
 <div class="a" style="left:0;top:171px;width:178px;height:2px;background:#d4d4d4"></div>
 <div class="t" style="left:18px;top:5px;font-size:12px;color:#222">軸の編集...</div>
 <div class="t" style="left:18px;top:23px;font-size:12px;color:#a8a8a8">軸範囲のクリア</div>
 <div class="t" style="left:18px;top:53px;font-size:12px;color:#222">マークの選択</div>
 <div class="t" style="left:18px;top:84px;font-size:12px;color:#fff">二重軸</div>
 <div class="t" style="left:18px;top:101px;font-size:12px;color:#222">マーク タイプ</div>
 <div class="t" style="left:158px;top:102px;font-size:10px;color:#222">&#9654;</div>
 <div class="t" style="left:18px;top:131px;font-size:12px;color:#222">書式設定...</div>
 <div class="t" style="left:18px;top:149px;font-size:12px;color:#222">ヘッダーの表示</div>
 <svg class="a" style="left:2px;top:150px" width="14" height="14" viewBox="0 0 14 14"><path d="M1.8 7.5L5.2 12.6L12.5 1.5" fill="none" stroke="#222" stroke-width="1.5"/></svg>
 <div class="t" style="left:18px;top:179px;font-size:12px;color:#222">リファレンス ラインの追加</div>
</div>

<!-- legend -->
<div class="card" style="left:1324px;top:173px;width:154px;height:92px;background:#fff"></div>
<div class="a" style="left:1325px;top:174px;width:152px;height:29px;background:#f7f7f7"></div>
<div class="t" style="left:1331px;top:183px;font-size:11px;color:#333">メジャー ネーム</div>
<div class="a" style="left:1328px;top:206px;width:14px;height:14px;background:#4e79a7"></div>
<div class="a" style="left:1328px;top:226px;width:14px;height:14px;background:#f28e2b"></div>
<div class="a" style="left:1328px;top:246px;width:14px;height:14px;background:#e15759"></div>
<div class="t" style="left:1347px;top:209px;font-size:11px;color:#444">整数1</div>
<div class="t" style="left:1347px;top:229px;font-size:11px;color:#444">整数2</div>
<div class="t" style="left:1347px;top:249px;font-size:11px;color:#444">整数3</div>

<!-- tabs -->
<div class="a" style="left:0;top:858px;width:1479px;height:30px;background:#e5e5e5;border-top:1px solid #d2d2d2"></div>
<div class="a" style="left:437px;top:859px;width:57px;height:29px;background:#fafafa"></div>
<svg class="a" style="left:0;top:855px" width="600" height="34" viewBox="0 855 600 34">
 <g stroke="#d0d0d0" stroke-width="1"><line x1="126.5" y1="859" x2="126.5" y2="888"/><line x1="184.5" y1="859" x2="184.5" y2="888"/><line x1="261.5" y1="859" x2="261.5" y2="888"/><line x1="380.5" y1="859" x2="380.5" y2="888"/><line x1="437.5" y1="859" x2="437.5" y2="888"/><line x1="494.5" y1="859" x2="494.5" y2="888"/><line x1="526.5" y1="859" x2="526.5" y2="888"/><line x1="558.5" y1="859" x2="558.5" y2="888"/><line x1="590.5" y1="859" x2="590.5" y2="888"/></g>
 <g fill="none" stroke="#666" stroke-width="1">
  <path d="M6.5 869.5v7.5c0 .8 1.5 1.2 3.5 1.2s3.5-.4 3.5-1.2v-7.5c0-.8-1.5-1.3-3.5-1.3s-3.5.5-3.5 1.3c0 .8 1.5 1.2 3.5 1.2s3.5-.4 3.5-1.2"/>
  <rect x="269.5" y="867.5" width="11" height="11"/><path d="M275 867.5v11M269.5 873h11"/>
  <rect x="504.5" y="867.5" width="11" height="11"/><path d="M507 876v-2M509.5 876v-5M512 876v-3"/>
  <rect x="536.5" y="867.5" width="11" height="11"/><path d="M542 867.5v11M536.5 873h11"/>
  <path d="M568.5 868.5l4 1.5 5-1.5v10l-5 1.5-4-1.5zM572.5 870v10"/>
 </g>
 <g stroke="#555" stroke-width="1.8"><path d="M516 875.5v7M512.5 879h7"/><path d="M548 875.5v7M544.5 879h7"/><path d="M580 875.5v7M576.5 879h7"/></g>
</svg>
<div class="t" style="left:20px;top:868px;font-size:11px;color:#666">データ ソース</div>
<div class="t" style="left:134px;top:868px;font-size:11px;color:#666">シート 1</div>
<div class="t" style="left:191px;top:868px;font-size:11px;color:#666">シート 1 (2)</div>
<div class="t" style="left:285px;top:868px;font-size:11px;color:#666">ダッシュボード 1</div>
<div class="t" style="left:387px;top:868px;font-size:11px;color:#666">シート 3</div>
<div class="t" style="left:444px;top:868px;font-size:11px;color:#666">シート 4</div>
<!-- status -->
<div class="a" style="left:0;top:888px;width:1479px;height:20px;background:#ececec;border-top:1px solid #d2d2d2"></div>
<div class="t" style="left:8px;top:894px;font-size:9.6px;color:#333">39 個のマーク</div>
<div class="t" style="left:85px;top:894px;font-size:9.6px;color:#333">2 行 基準 1 列</div>
<div class="t" style="left:160px;top:894px;font-size:9.6px;color:#333">メジャー バリュー の合計: 1,006,597</div>
<svg class="a" style="left:1100px;top:888px" width="379" height="20" viewBox="1100 888 379 20">
 <g stroke="#d0d0d0" stroke-width="1"><line x1="1108.5" y1="889" x2="1108.5" y2="908"/><line x1="1235.5" y1="889" x2="1235.5" y2="908"/><line x1="1262.5" y1="889" x2="1262.5" y2="908"/><line x1="1289.5" y1="889" x2="1289.5" y2="908"/><line x1="1336.5" y1="889" x2="1336.5" y2="908"/><line x1="1407.5" y1="889" x2="1407.5" y2="908"/></g>
 <g fill="#aaa"><rect x="1345" y="895" width="1.2" height="7.5"/><path d="M1351.5 895v7.5l-5-3.75z"/><path d="M1366.5 895v7.5l-5-3.75z"/><path d="M1378 895v7.5l5-3.75z"/><path d="M1392.5 895v7.5l5-3.75z"/><rect x="1398.3" y="895" width="1.2" height="7.5"/>
  <rect x="1416" y="894" width="3" height="3"/><rect x="1420.5" y="894" width="3" height="3"/><rect x="1425" y="894" width="3" height="3"/>
  <rect x="1416" y="898.5" width="3" height="3"/><rect x="1420.5" y="898.5" width="3" height="3"/><rect x="1425" y="898.5" width="3" height="3"/>
  <rect x="1416" y="903" width="3" height="3"/><rect x="1420.5" y="903" width="3" height="3"/><rect x="1425" y="903" width="3" height="3"/>
  <rect x="1436.5" y="893.5" width="11.5" height="7"/><rect x="1436.5" y="902" width="3" height="3"/><rect x="1440.8" y="902" width="3" height="3"/><rect x="1445" y="902" width="3" height="3"/>
 </g>
 <rect x="1458" y="893.5" width="11.5" height="11.5" fill="#666"/>
</svg>
</body></html>
